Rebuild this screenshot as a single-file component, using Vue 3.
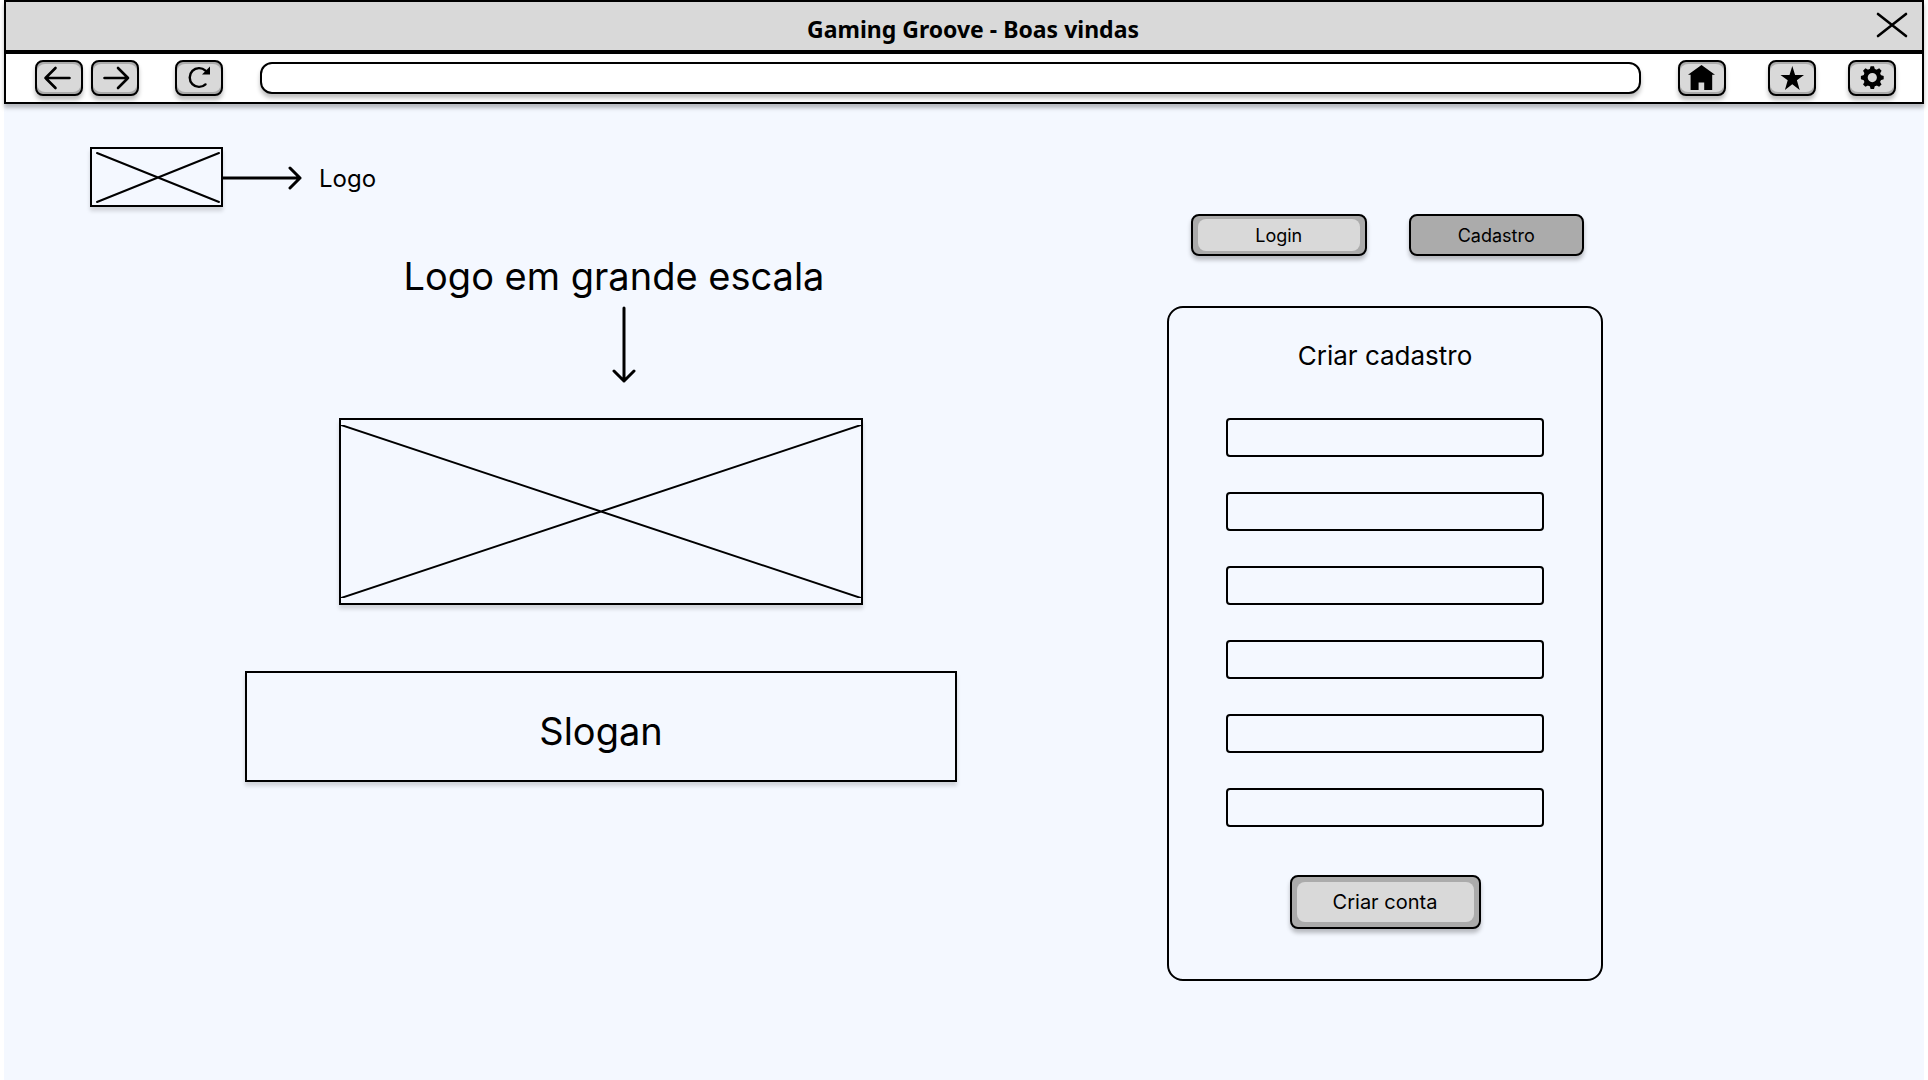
<script setup>
import { reactive } from 'vue'

const fields = ['Nome', 'Sobrenome', 'Usuário', 'E-mail', 'Senha', 'Confirmar senha']
const form = reactive(Object.fromEntries(fields.map((name) => [name, ''])))
</script>

<template>
  <div class="window">
    <header class="chrome">
      <div class="titlebar">
        <h1>Gaming Groove - Boas vindas</h1>
        <button class="close" type="button" aria-label="Fechar">
          <svg width="32" height="26" viewBox="0 0 32 26">
            <path d="M2 2 30 24M30 2 2 24" fill="none" stroke="#000" stroke-width="2.6" stroke-linecap="round" />
          </svg>
        </button>
      </div>
      <nav class="toolbar">
        <div class="history">
          <button class="key" type="button" aria-label="Voltar">
            <svg viewBox="0 2 44 28">
              <path d="M32.500 16H8.500M18.500 6 8.500 16l10 10" fill="none" stroke="#000" stroke-width="2.600" stroke-linecap="round" stroke-linejoin="round" />
            </svg>
          </button>
          <button class="key" type="button" aria-label="Avançar">
            <svg viewBox="0 2 44 28">
              <path d="M11.500 16H35M25 6l10 10-10 10" fill="none" stroke="#000" stroke-width="2.600" stroke-linecap="round" stroke-linejoin="round" />
            </svg>
          </button>
        </div>
        <button class="key" type="button" aria-label="Recarregar">
          <svg viewBox="0 2 44 28">
            <path d="M28.500 8.600A9.400 9.400 0 1 0 28.500 22.400" fill="none" stroke="#000" stroke-width="2.400" stroke-linecap="round" />
            <path d="M33 4.500V12.500H25z" />
          </svg>
        </button>
        <input class="address" type="text" aria-label="Endereço" />
        <div class="shortcuts">
          <button class="key home" type="button" aria-label="Início">
            <svg viewBox="0 2 44 28">
              <path d="M21.500 3 35 12.800H32.200V28H24.200V20.400H18.600V28H10.600V12.800H8z" />
            </svg>
          </button>
          <button class="key" type="button" aria-label="Favoritos">
            <svg viewBox="0 2 44 28">
              <path d="M22.300 4 25.100 12.900H34L26.900 18.300 29.700 28 22.300 22.200 14.900 28 17.700 18.300 10.500 12.900H19.500z" />
            </svg>
          </button>
          <button class="key" type="button" aria-label="Configurações">
            <svg viewBox="0 2 44 28">
              <g transform="translate(22.300 15.600)">
                <circle r="6.800" fill="none" stroke="#000" stroke-width="4.400" />
                <path
                  v-for="n in 8"
                  :key="n"
                  d="M-2.800-7.500-1.700-11.400H1.700L2.800-7.500z"
                  :transform="`rotate(${n * 45})`"
                />
              </g>
            </svg>
          </button>
        </div>
      </nav>
    </header>

    <div class="brand">
      <svg class="brand-box" viewBox="0 0 133 60" role="img" aria-label="Logo">
        <rect x="1" y="1" width="131" height="58" fill="none" stroke="#000" stroke-width="2" />
        <path d="M7 6 129 55M129 6 7 55" stroke="#000" stroke-width="2" stroke-linecap="round" />
      </svg>
      <svg class="brand-arrow" viewBox="0 0 80 26">
        <path d="M0 14H77M67 4 77 14 67 24" fill="none" stroke="#000" stroke-width="3" stroke-linecap="round" stroke-linejoin="round" />
      </svg>
      <span>Logo</span>
    </div>

    <main>
      <section class="hero">
        <h2>Logo em grande escala</h2>
        <svg class="hero-arrow" viewBox="0 0 24 78">
          <path d="M12 2V75M2 65 12 75 22 65" fill="none" stroke="#000" stroke-width="3" stroke-linecap="round" stroke-linejoin="round" />
        </svg>
        <div class="hero-logo">
          <svg viewBox="0 0 523 172" preserveAspectRatio="none">
            <path d="M0 0 523 172M523 0 0 172" stroke="#000" stroke-width="2" />
          </svg>
        </div>
        <p class="slogan">Slogan</p>
      </section>

      <section class="account">
        <div class="tabs">
          <button class="raised" type="button"><span>Login</span></button>
          <button class="raised pressed" type="button"><span>Cadastro</span></button>
        </div>
        <form class="panel" @submit.prevent>
          <h2>Criar cadastro</h2>
          <div class="fields">
            <input
              v-for="name in fields"
              :key="name"
              v-model="form[name]"
              :type="name.toLowerCase().includes('senha') ? 'password' : 'text'"
              :aria-label="name"
            />
          </div>
          <button class="raised submit" type="submit"><span>Criar conta</span></button>
        </form>
      </section>
    </main>
  </div>
</template>

<style>
body {
  margin: 0;
  background: #fff;
}
</style>

<style scoped>
* {
  box-sizing: border-box;
}

.window {
  min-height: 100vh;
  margin: 0 4px;
  background: #f4f8ff;
  color: #000;
  font-family: Inter, sans-serif;
}

h1,
h2,
p {
  margin: 0;
  font-weight: 400;
}

button,
input {
  margin: 0;
  padding: 0;
  border: 2px solid #000;
  color: inherit;
  font-family: inherit;
}

svg {
  display: block;
}

.chrome {
  box-shadow: 0 4px 4px rgba(0, 0, 0, 0.25);
}

.titlebar {
  position: relative;
  display: flex;
  align-items: center;
  justify-content: center;
  height: 52px;
  padding: 6px 0 0 18px;
  border: 2px solid #000;
  background: #d9d9d9;
}

.titlebar h1 {
  font: 700 23px/32px "Noto Sans", sans-serif;
}

.close {
  position: absolute;
  top: 10px;
  right: 14px;
  border: 0;
  background: none;
}

.toolbar {
  display: flex;
  align-items: center;
  height: 52px;
  padding: 0 26px 0 29px;
  border: 2px solid #000;
  background: #fff;
}

.history {
  display: flex;
  gap: 8px;
  margin-right: 36px;
}

.key {
  flex: none;
  width: 48px;
  height: 36px;
  padding: 2px 0;
  border-radius: 8px;
  background: #ababab;
  box-shadow: 0 4px 4px rgba(0, 0, 0, 0.25);
}

.key svg {
  width: 44px;
  height: 28px;
  border-radius: 8px;
  background: #d9d9d9;
}

.address {
  flex: 1;
  min-width: 0;
  height: 32px;
  margin: 0 37px;
  padding: 0 12px;
  border-radius: 12px;
  background: #fff;
  box-shadow: 0 4px 4px rgba(0, 0, 0, 0.25);
}

.shortcuts {
  display: flex;
  gap: 32px;
}

.home {
  margin-right: 10px;
}

.brand {
  display: flex;
  align-items: center;
  padding: 43px 86px 0;
  font-size: 24px;
  line-height: 30px;
}

.brand span {
  padding-top: 4px;
}

.brand-box {
  width: 133px;
  height: 60px;
  box-shadow: 0 4px 4px rgba(0, 0, 0, 0.15);
}

.brand-arrow {
  width: 80px;
  height: 26px;
  margin-right: 16px;
}

main {
  display: grid;
  grid-template-columns: 1022fr 546fr;
  padding: 7px 266px 40px 86px;
}

.hero {
  display: flex;
  flex-direction: column;
  align-items: center;
  padding-top: 39px;
}

.hero h2 {
  padding-left: 26px;
  font-size: 38px;
  line-height: 46px;
}

.hero-arrow {
  width: 24px;
  height: 78px;
  margin: 7px 0 34px 46px;
}

.hero-logo {
  width: 524px;
  max-width: 100%;
  height: 187px;
  padding: 5px 0;
  border: 2px solid #000;
  box-shadow: 0 4px 4px rgba(0, 0, 0, 0.15);
}

.hero-logo svg {
  width: 100%;
  height: 100%;
}

.slogan {
  width: 712px;
  max-width: 100%;
  margin-top: 66px;
  padding: 35px 0 26px;
  border: 2px solid #000;
  box-shadow: 0 4px 4px rgba(0, 0, 0, 0.15);
  font-size: 38px;
  line-height: 46px;
  text-align: center;
}

.account {
  display: flex;
  flex-direction: column;
  align-items: center;
}

.tabs,
.panel {
  width: 436px;
  max-width: 100%;
}

.tabs {
  display: flex;
  gap: 42px;
  height: 42px;
  margin-bottom: 50px;
  padding: 0 19px 0 24px;
}

.raised {
  flex: 1;
  padding: 3px 5px;
  border-radius: 8px;
  background: #ababab;
  box-shadow: 0 4px 4px rgba(0, 0, 0, 0.25);
  font-size: 18px;
}

.raised span {
  display: flex;
  align-items: center;
  justify-content: center;
  height: 100%;
  border-radius: 8px;
  background: #d9d9d9;
}

.pressed span {
  background: none;
}

.panel {
  display: flex;
  flex-direction: column;
  align-items: center;
  padding: 32px 57px 50px;
  border: 2px solid #000;
  border-radius: 16px;
}

.panel h2 {
  font-size: 26px;
  line-height: 32px;
}

.fields {
  display: grid;
  gap: 35px;
  width: 100%;
  margin: 46px 0 48px;
}

.fields input {
  width: 100%;
  height: 39px;
  padding: 0 10px;
  border-radius: 4px;
  background: none;
  font-size: 18px;
}

.submit {
  flex: none;
  width: 191px;
  height: 54px;
  padding: 5px;
  font-size: 20px;
}
</style>
